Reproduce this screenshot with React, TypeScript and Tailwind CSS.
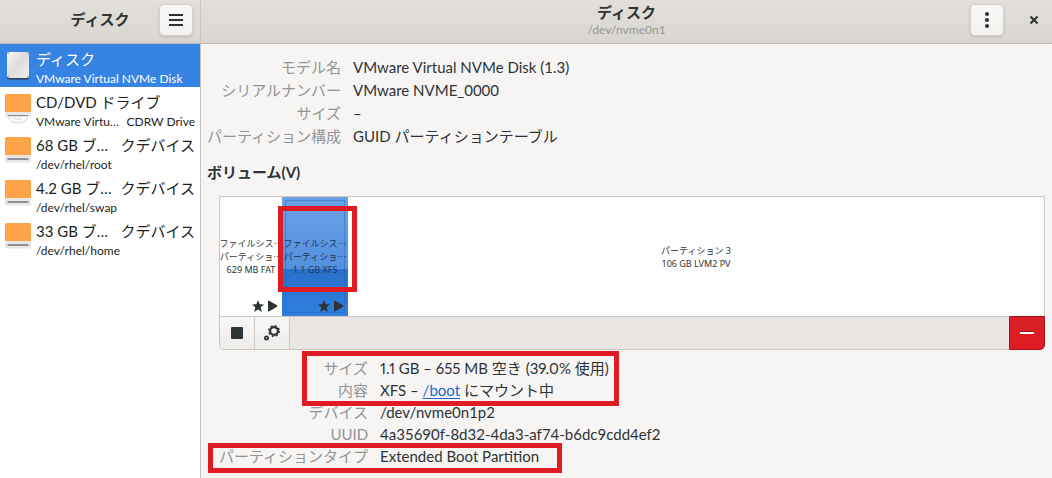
import { useState, type ReactNode } from 'react'

type Device = {
  id: string
  title: string
  titleEnd?: string
  sub: string
  subEnd?: string
  icon: 'disk' | 'optical' | 'block'
}

const DEVICES: Device[] = [
  { id: 'nvme', title: 'ディスク', sub: 'VMware Virtual NVMe Disk', icon: 'disk' },
  { id: 'cd', title: 'CD/DVD ドライブ', sub: 'VMware Virtu…', subEnd: 'CDRW Drive', icon: 'optical' },
  { id: 'root', title: '68 GB ブ…', titleEnd: 'クデバイス', sub: '/dev/rhel/root', icon: 'block' },
  { id: 'swap', title: '4.2 GB ブ…', titleEnd: 'クデバイス', sub: '/dev/rhel/swap', icon: 'block' },
  { id: 'home', title: '33 GB ブ…', titleEnd: 'クデバイス', sub: '/dev/rhel/home', icon: 'block' },
]

function DeviceIcon({ icon }: { icon: Device['icon'] }) {
  if (icon === 'disk') {
    return (
      <svg width="26" height="32" viewBox="0 0 26 32" className="shrink-0" aria-hidden="true">
        <defs>
          <linearGradient id="disk-face" x1="0" y1="0" x2="1" y2="1">
            <stop offset="0" stopColor="#f8f7f6" />
            <stop offset="0.5" stopColor="#dddcda" />
            <stop offset="1" stopColor="#f4f3f2" />
          </linearGradient>
        </defs>
        <rect x="2" y="4" width="22" height="25.500" rx="2" fill="#2f3b50" />
        <rect x="2" y="2" width="22" height="26" rx="2" fill="url(#disk-face)" />
        <circle cx="3.500" cy="3.500" r="0.800" fill="#a5a8ac" />
        <circle cx="22.500" cy="3.500" r="0.800" fill="#a5a8ac" />
        <circle cx="3.500" cy="26.500" r="0.800" fill="#a5a8ac" />
        <circle cx="22.500" cy="26.500" r="0.800" fill="#a5a8ac" />
      </svg>
    )
  }
  return (
    <svg width="26" height="32" viewBox="0 0 26 32" className="shrink-0" aria-hidden="true">
      {icon === 'optical' ? (
        <>
          <path d="M2.500 23.500h21c-1.500 4-5.500 6.500-10.500 6.500s-9-2.500-10.500-6.500z" fill="#fbfafa" stroke="#cfcdca" strokeWidth="0.8" />
          <path d="M9 24a4 2.500 0 0 0 8 0z" fill="#fff" stroke="#cfcdca" strokeWidth="0.6" />
          <rect x="0" y="19" width="26" height="5" rx="1" fill="#e9e7e4" />
          <rect x="3" y="22" width="20" height="1" fill="#8a8990" />
        </>
      ) : (
        <>
          <rect x="0" y="18" width="26" height="8.500" rx="1.500" fill="#e9e7e4" />
          <rect x="2.500" y="22.400" width="21" height="1.200" fill="#56586a" />
        </>
      )}
      <path d="M1.500 1h23a1.500 1.500 0 0 1 1.500 1.500V19H0V2.500A1.500 1.500 0 0 1 1.500 1z" fill="#ffa348" />
    </svg>
  )
}

function Flags() {
  return (
    <svg width="26" height="12" viewBox="0 0 26 12" fill="currentColor" aria-hidden="true">
      <path d="M6 0l1.700 4.200 4.300.3-3.300 2.800L9.800 12 6 9.400 2.200 12l1.100-4.700L0 4.500l4.300-.3z" />
      <path d="M16 1.200v9.600c0 .6.6.8 1 .6l8-4.600c.5-.3.5-1.300 0-1.600L17 .7c-.4-.3-1-.1-1 .5z" />
    </svg>
  )
}

function Volume({ lines, flags, className }: { lines: string[]; flags?: boolean; className: string }) {
  return (
    <button
      type="button"
      className={`relative flex h-full flex-col items-center justify-center whitespace-nowrap font-['Noto_Sans','Noto_Sans_CJK_JP',sans-serif] text-[9px] leading-[13px] ${className}`}
    >
      {lines.map((line) => (
        <span key={line} className="relative z-1">{line}</span>
      ))}
      {flags && (
        <span className="absolute right-1 bottom-1 z-1 text-[#2e3436]">
          <Flags />
        </span>
      )}
    </button>
  )
}

function Row({ label, children }: { label: string; children: ReactNode }) {
  return (
    <>
      <dt className="text-right text-[#929595]">{label}</dt>
      <dd>{children}</dd>
    </>
  )
}

const headerButton =
  'flex h-8 w-[34px] items-center justify-center rounded-[5px] border border-[#d3cfca] bg-linear-to-b from-[#f9f8f8] to-[#f2f1ef] shadow-sm'
const toolButton =
  'flex w-[35px] items-center justify-center border-r border-[#cdc7c2] bg-linear-to-b from-[#f8f7f7] to-[#eeecea]'

export default function App() {
  const [selected, setSelected] = useState('nvme')

  return (
    <div className="flex min-h-screen bg-[#f6f5f4] font-['Lato','Noto_Sans_CJK_JP',sans-serif] text-[15px] text-[#2e3436]">
      <aside className="flex w-[201px] shrink-0 flex-col border-r border-[#c9c5c1] bg-white">
        <header className="grid h-11 grid-cols-[1fr_auto_1fr] items-center border-b border-[#bfb8b1] bg-linear-to-b from-[#e3e0dc] to-[#d9d5d0] px-[7px] pb-1">
          <h1 className="col-start-2 font-bold">ディスク</h1>
          <button type="button" aria-label="メニュー" className={`justify-self-end ${headerButton}`}>
            <svg width="14" height="12" viewBox="0 0 14 12" fill="currentColor" aria-hidden="true">
              <path d="M0 0h14v2H0zM0 5h14v2H0zM0 10h14v2H0z" />
            </svg>
          </button>
        </header>

        <nav>
          {DEVICES.map((d) => (
            <button
              key={d.id}
              type="button"
              onClick={() => setSelected(d.id)}
              className={`flex h-[43px] w-full items-center gap-[5px] px-[5px] text-left whitespace-nowrap ${
                selected === d.id ? 'bg-[#3584e4] text-white' : 'text-[#1c1f20]'
              }`}
            >
              <DeviceIcon icon={d.icon} />
              <span className="flex min-w-0 flex-1 flex-col pt-1">
                <span className="flex justify-between leading-[22px]">
                  <span>{d.title}</span>
                  <span>{d.titleEnd}</span>
                </span>
                <span className="flex justify-between text-[12px] leading-[18px]">
                  <span>{d.sub}</span>
                  <span>{d.subEnd}</span>
                </span>
              </span>
            </button>
          ))}
        </nav>
      </aside>

      <main className="min-w-0 flex-1">
        <header className="grid h-11 grid-cols-[1fr_auto_1fr] items-center border-b border-[#bfb8b1] bg-linear-to-b from-[#e3e0dc] to-[#d9d5d0] px-2 pb-1">
          <div className="col-start-2 text-center">
            <h2 className="leading-5 font-bold">ディスク</h2>
            <p className="text-[12px] leading-4 text-[#929595]">/dev/nvme0n1</p>
          </div>
          <div className="flex items-center justify-end gap-5">
            <button type="button" aria-label="ドライブのオプション" className={headerButton}>
              <svg width="4" height="16" viewBox="0 0 4 16" fill="currentColor" aria-hidden="true">
                <circle cx="2" cy="2" r="2" />
                <circle cx="2" cy="8" r="2" />
                <circle cx="2" cy="14" r="2" />
              </svg>
            </button>
            <button type="button" aria-label="閉じる" className="flex h-8 w-5 items-center justify-center">
              <svg width="8" height="8" viewBox="0 0 8 8" stroke="currentColor" strokeWidth="2" aria-hidden="true">
                <path d="M0.500 0.500l7 7M7.500 0.500l-7 7" />
              </svg>
            </button>
          </div>
        </header>

        <div className="pt-3 pr-[7px] pl-[6px]">
          <dl className="grid grid-cols-[auto_1fr] gap-x-3 leading-[23px] whitespace-nowrap">
            <Row label="モデル名">VMware Virtual NVMe Disk (1.3)</Row>
            <Row label="シリアルナンバー">VMware NVME_0000</Row>
            <Row label="サイズ">–</Row>
            <Row label="パーティション構成">GUID パーティションテーブル</Row>
          </dl>

          <h3 className="mt-3 leading-6 font-bold">ボリューム(V)</h3>

          <section className="mt-3 ml-3 rounded-b-[5px] border border-[#cdc7c2]">
            <div className="flex h-[119px] bg-white">
              <Volume
                lines={['ファイルシス⋯', 'パーティショ⋯', '629 MB FAT']}
                flags
                className="w-[62px]"
              />
              <div className="relative w-[66px]">
                <Volume
                  lines={['ファイルシス⋯', 'パーティショ⋯', '1.1 GB XFS']}
                  flags
                  className="w-full bg-linear-to-b from-[#6aa1e8] from-0% via-[#5590de] via-60% to-[#5590de] to-60% text-[#1d3557] before:absolute before:inset-x-0 before:top-[72px] before:bottom-0 before:bg-linear-to-b before:from-[#2a6fca] before:to-[#3080e0] after:absolute after:inset-[3px] after:border after:border-[#1b5cb0]/40"
                />
                <div className="pointer-events-none absolute top-[9px] -left-1 z-10 h-[86px] w-[79px] border-[5px] border-[#e01b24]" />
              </div>
              <Volume lines={['パーティション 3', '106 GB LVM2 PV']} className="flex-1" />
            </div>
            <div className="flex h-[33px] rounded-b-[4px] border-t border-[#cdc7c2] bg-[#e9e6e3]">
              <button type="button" aria-label="アンマウント" className={`rounded-bl-[4px] ${toolButton}`}>
                <svg width="12" height="12" viewBox="0 0 12 12" fill="currentColor" aria-hidden="true">
                  <rect width="12" height="12" rx="1" />
                </svg>
              </button>
              <button type="button" aria-label="パーティションのオプション" className={toolButton}>
                <svg width="16" height="16" viewBox="0 0 16 16" fill="none" stroke="currentColor" aria-hidden="true">
                  <circle cx="10" cy="6" r="3.900" strokeWidth="2.200" />
                  <circle cx="10" cy="6" r="5.300" strokeWidth="1.400" strokeDasharray="2.080 2.080" />
                  <circle cx="2.500" cy="13" r="1.600" strokeWidth="1.800" />
                </svg>
              </button>
              <button
                type="button"
                aria-label="パーティションの削除"
                className="-mt-px -mr-px -mb-px ml-auto flex w-9 items-center justify-center rounded-br-[5px] border border-[#a5161d] bg-linear-to-b from-[#d81f27] to-[#e01b24] text-white"
              >
                <svg width="14" height="4" viewBox="0 0 14 4" aria-hidden="true">
                  <path d="M0 0h14v2H0z" fill="#8f1016" />
                  <path d="M0 1h14v2H0z" fill="currentColor" />
                </svg>
              </button>
            </div>
          </section>

          <div className="relative mt-[7px] ml-3">
            <dl className="grid grid-cols-[auto_1fr] gap-x-3 leading-[22px] whitespace-nowrap">
              <Row label="サイズ">
                <span className="proportional-nums">1.1 GB – 655 MB 空き (39.0% 使用)</span>
              </Row>
              <Row label="内容">
                XFS –{' '}
                <a href="#boot" className="text-[#1b6acb] underline underline-offset-2">/boot</a>
                {' '}にマウント中
              </Row>
              <Row label="デバイス">/dev/nvme0n1p2</Row>
              <Row label="UUID">4a35690f-8d32-4da3-af74-b6dc9cdd4ef2</Row>
              <Row label="パーティションタイプ">Extended Boot Partition</Row>
            </dl>
            <div className="pointer-events-none absolute -top-[6px] left-[83px] h-[55px] w-[317px] border-[5px] border-[#e01b24]" />
            <div className="pointer-events-none absolute top-[86px] -left-[11px] h-[30px] w-[354px] border-[5px] border-[#e01b24]" />
          </div>
        </div>
      </main>
    </div>
  )
}
